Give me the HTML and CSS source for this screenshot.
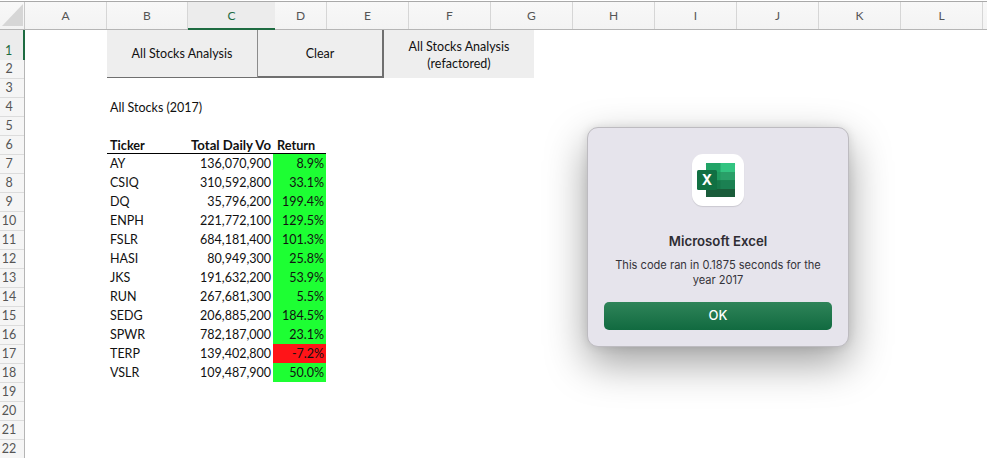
FILE: index.html
```html
<!DOCTYPE html>
<html lang="en">
<head>
    <meta charset="UTF-8">
    <meta name="viewport" content="width=device-width, initial-scale=1.0">
    <title>All Stocks Analysis</title>
    <link rel="stylesheet" href="styles.css">
</head>
<body>
    <div class="columns">
        <div class="corner"><div class="corner-mark"></div></div>
        <div class="col col-a">A</div>
        <div class="col col-b">B</div>
        <div class="col col-c active">C</div>
        <div class="col col-d">D</div>
        <div class="col">E</div>
        <div class="col">F</div>
        <div class="col">G</div>
        <div class="col">H</div>
        <div class="col">I</div>
        <div class="col">J</div>
        <div class="col">K</div>
        <div class="col">L</div>
    </div>
    <div class="body">
        <div class="rows">
            <div class="row first active">1</div>
            <div class="row">2</div>
            <div class="row">3</div>
            <div class="row">4</div>
            <div class="row">5</div>
            <div class="row">6</div>
            <div class="row">7</div>
            <div class="row">8</div>
            <div class="row">9</div>
            <div class="row">10</div>
            <div class="row">11</div>
            <div class="row">12</div>
            <div class="row">13</div>
            <div class="row">14</div>
            <div class="row">15</div>
            <div class="row">16</div>
            <div class="row">17</div>
            <div class="row">18</div>
            <div class="row">19</div>
            <div class="row">20</div>
            <div class="row">21</div>
            <div class="row">22</div>
        </div>
        <div class="sheet">
            <div class="macros">
                <button class="macro macro-run">All Stocks Analysis</button>
                <button class="macro macro-clear">Clear</button>
                <button class="macro macro-new">All Stocks Analysis<br>(refactored)</button>
            </div>
            <div class="title">All Stocks (2017)</div>
            <div class="stocks">
                <div class="head">Ticker</div><div class="head vol-head">Total Daily Vo</div><div class="head ret-head">Return</div>
                <div>AY</div><div class="num">136,070,900</div><div class="ret up">8.9%</div>
                <div>CSIQ</div><div class="num">310,592,800</div><div class="ret up">33.1%</div>
                <div>DQ</div><div class="num">35,796,200</div><div class="ret up">199.4%</div>
                <div>ENPH</div><div class="num">221,772,100</div><div class="ret up">129.5%</div>
                <div>FSLR</div><div class="num">684,181,400</div><div class="ret up">101.3%</div>
                <div>HASI</div><div class="num">80,949,300</div><div class="ret up">25.8%</div>
                <div>JKS</div><div class="num">191,632,200</div><div class="ret up">53.9%</div>
                <div>RUN</div><div class="num">267,681,300</div><div class="ret up">5.5%</div>
                <div>SEDG</div><div class="num">206,885,200</div><div class="ret up">184.5%</div>
                <div>SPWR</div><div class="num">782,187,000</div><div class="ret up">23.1%</div>
                <div>TERP</div><div class="num">139,402,800</div><div class="ret down">-7.2%</div>
                <div>VSLR</div><div class="num">109,487,900</div><div class="ret up">50.0%</div>
            </div>
        </div>
    </div>

    <div class="dialog">
        <div class="app-icon">
            <svg width="52" height="52" viewBox="0 0 52 52">
                <rect x="14" y="9" width="29" height="34" rx="1.5" fill="#1f6b45"/>
                <rect x="14" y="9" width="29" height="9" fill="#21a366"/>
                <rect x="28.5" y="9" width="14.5" height="9" fill="#33c481"/>
                <rect x="14" y="18" width="29" height="8.5" fill="#1f9a5f"/>
                <rect x="28.5" y="18" width="14.5" height="8.5" fill="#2a9f68"/>
                <rect x="14" y="26.5" width="29" height="8.5" fill="#17784a"/>
                <rect x="28.5" y="26.5" width="14.5" height="8.5" fill="#1b8052"/>
                <rect x="14" y="35" width="29" height="8" fill="#1a5c3a"/>
                <rect x="5" y="16" width="20" height="20" rx="1.5" fill="#117043"/>
                <text x="15" y="31" class="icon-x">X</text>
            </svg>
        </div>
        <div class="dialog-title">Microsoft Excel</div>
        <div class="dialog-text">This code ran in 0.1875 seconds for the<br>year 2017</div>
        <button class="ok">OK</button>
    </div>
</body>
</html>
```

FILE: styles.css
```css
html, body {
    margin: 0;
    height: 458px;
    overflow: hidden;
    background-color: #fff;
}
body {
    font-family: Lato, "Open Sans", sans-serif;
    font-size: 12.5px;
    color: #111;
}
.columns {
    display: flex;
    height: 27px;
    margin-top: 1px;
    border-top: 1px solid #a9a9a9;
    border-bottom: 1px solid #b5b5b5;
    background: linear-gradient(#f8f8f8, #f3f3f3);
    color: #555;
    font-size: 12px;
}
.corner {
    flex: 0 0 25px;
    box-sizing: border-box;
    border-right: 1px solid #c8c8c8;
}
.corner-mark {
    width: 0;
    height: 0;
    margin: 2px 0 0 2px;
    border-left: 21px solid transparent;
    border-bottom: 22px solid #d6d6d6;
}
.col {
    flex: 0 0 82px;
    box-sizing: border-box;
    border-right: 1px solid #d6d6d6;
    display: flex;
    align-items: center;
    justify-content: center;
}
.col-b { flex-basis: 81px; }
.col-c { flex-basis: 87px; }
.col-d { flex-basis: 52px; }
.col.active {
    background-color: #ececec;
    border-bottom: 2px solid #1d6b41;
    border-right: none;
    color: #1d6b41;
    height: 28px;
}
.body {
    display: flex;
}
.rows {
    flex: 0 0 25px;
    box-sizing: border-box;
    border-right: 1px solid #b5b5b5;
    background-color: #f5f5f5;
    color: #555;
    font-size: 12.5px;
}
.row {
    box-sizing: border-box;
    height: 19px;
    line-height: 18px;
    padding-right: 6px;
    text-align: center;
    border-bottom: 1px solid #dcdcdc;
}
.row.first {
    height: 30px;
    padding-top: 12px;
}
.row.active {
    color: #1d6b41;
    background-color: #ececec;
    border-right: 2px solid #1d6b41;
    border-bottom: none;
    margin-right: -1px;
}
.sheet {
    flex: 1;
    padding-left: 82px;
}
.macros {
    display: flex;
    height: 48px;
}
.macro {
    font-family: inherit;
    font-size: 12.5px;
    color: #111;
    background-color: #eeeeee;
    border: none;
    border-radius: 0;
    padding: 0;
    line-height: 17px;
}
.macro-run {
    width: 151px;
    border-right: 1px solid #8b8b8b;
    border-bottom: 1px solid #6f6f6f;
}
.macro-clear {
    width: 126px;
    border-right: 2px solid #6f6f6f;
    border-bottom: 2px solid #6f6f6f;
}
.macro-new {
    width: 150px;
    padding-top: 2px;
}
.title {
    height: 19px;
    line-height: 21px;
    margin: 19px 0;
    padding-left: 3px;
}
.stocks {
    display: grid;
    grid-template-columns: 80px 86px 53px;
    grid-auto-rows: 19px;
    line-height: 20px;
    width: 219px;
}
.stocks > div {
    padding-left: 3px;
    white-space: nowrap;
}
.stocks .head {
    font-size: 12.7px;
    font-weight: 700;
    border-bottom: 1px solid #000;
    box-sizing: border-box;
}
.stocks .vol-head {
    padding-left: 4px;
    font-size: 13.2px;
}
.stocks .ret-head {
    padding-left: 4px;
}
.stocks .num {
    padding: 0 2px 0 0;
    text-align: right;
}
.stocks .ret {
    padding: 0 2px 0 0;
    text-align: right;
}
.up { background-color: #1dff33; }
.down { background-color: #ff1418; }
.dialog {
    position: absolute;
    left: 587px;
    top: 127px;
    width: 262px;
    height: 220px;
    box-sizing: border-box;
    border: 1px solid #bdbbc0;
    border-radius: 11px;
    background-color: #e6e4ec;
    box-shadow: 0 16px 42px rgba(0, 0, 0, 0.38), 0 0 10px rgba(0, 0, 0, 0.1);
    font-family: Inter, "Liberation Sans", sans-serif;
    text-align: center;
    display: flex;
    flex-direction: column;
    align-items: center;
    padding: 26px 16px 16px;
    color: #35333a;
}
.app-icon {
    width: 52px;
    height: 52px;
    border-radius: 11px;
    background-color: #fff;
    box-shadow: 0 1px 1px rgba(0, 0, 0, 0.12);
}
.icon-x {
    font-family: Inter, "Liberation Sans", sans-serif;
    font-size: 14px;
    font-weight: 700;
    fill: #fff;
    text-anchor: middle;
}
.dialog-title {
    margin-top: 27px;
    font-size: 13.2px;
    font-weight: 600;
    line-height: 16px;
    color: #2e2c33;
}
.dialog-text {
    margin-top: 9px;
    font-size: 11.1px;
    line-height: 14.5px;
}
.ok {
    width: 228px;
    height: 28px;
    margin-top: auto;
    padding: 0 0 3px;
    border: none;
    border-radius: 5px;
    background: linear-gradient(#2f8459, #116a40);
    color: #fff;
    font-family: inherit;
    font-size: 13px;
    font-weight: 500;
}
```
